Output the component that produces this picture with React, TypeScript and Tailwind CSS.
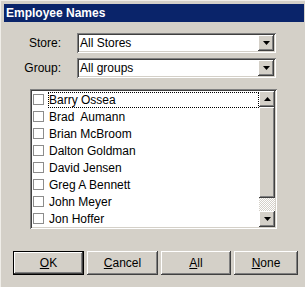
import React from "react";

const font = { fontFamily: '"Liberation Sans", Arial, sans-serif' };

function Down() {
  return (
    <svg width="7" height="4" viewBox="0 0 7 4">
      <path d="M0 0h7L3.5 4z" fill="#000" />
    </svg>
  );
}
function Up() {
  return (
    <svg width="7" height="4" viewBox="0 0 7 4">
      <path d="M0 4h7L3.5 0z" fill="#000" />
    </svg>
  );
}

const raised =
  "bg-[#d4d0c8] shadow-[inset_-1px_-1px_#404040,inset_1px_1px_#fff,inset_-2px_-2px_#808080,inset_2px_2px_#d4d0c8]";
const sunken =
  "shadow-[inset_1px_1px_#808080,inset_-1px_-1px_#fff,inset_2px_2px_#404040,inset_-2px_-2px_#d4d0c8]";

function Combo({ value }: { value: string }) {
  return (
    <div className={`ml-[16px] w-[199px] h-[20px] bg-white p-[2px] flex items-center ${sunken}`}>
      <div className="flex-1 pl-[1px] text-[12px] text-black leading-none">{value}</div>
      <div className={`w-[16px] h-[16px] flex items-center justify-center ${raised}`}>
        <Down />
      </div>
    </div>
  );
}

const names = [
  "Barry Ossea",
  "Brad  Aumann",
  "Brian McBroom",
  "Dalton Goldman",
  "David Jensen",
  "Greg A Bennett",
  "John Meyer",
  "Jon Hoffer",
];

function Btn({ label, rest, w, def }: { label: string; rest: string; w: string; def?: boolean }) {
  const inner = (
    <div className={`h-full w-full flex items-center justify-center text-[12px] text-black ${raised}`}>
      <span>
        <span className="underline">{label}</span>
        {rest}
      </span>
    </div>
  );
  return def ? (
    <div className={`${w} h-[24px] border border-black`}>{inner}</div>
  ) : (
    <div className={`${w} h-[24px]`}>{inner}</div>
  );
}

export default function App() {
  return (
    <div
      className="w-[305px] h-[287px] bg-[#d4d0c8] overflow-hidden flex flex-col pt-[4px] pl-[3px] pr-[1px] border-t border-l border-[#f0eee9]"
      style={font}
    >
      <div className="h-[18px] bg-[#0a246a] text-white font-bold text-[12px] leading-[18px] pl-[2px] -mt-[1px]">
        Employee Names
      </div>

      <div className="mt-[11px] flex items-center h-[20px]">
        <div className="w-[57px] text-right text-[12px] text-black">Store:</div>
        <Combo value="All Stores" />
      </div>
      <div className="mt-[5px] flex items-center h-[20px]">
        <div className="w-[57px] text-right text-[12px] text-black">Group:</div>
        <Combo value="All groups" />
      </div>

      <div className={`mt-[11px] ml-[26px] w-[247px] h-[140px] bg-white p-[2px] flex ${sunken}`}>
        <div className="flex-1 flex flex-col">
          {names.map((n, i) => (
            <div key={n} className="h-[17px] flex items-center">
              <div className="ml-[1px] w-[11px] h-[11px] border border-[#8c8c8c] bg-white shrink-0" />
              <div
                className={`ml-[4px] flex-1 h-[16px] flex items-center pl-[1px] text-[12px] text-black whitespace-pre ${
                  i === 0 ? "outline outline-1 outline-dotted outline-black -outline-offset-1" : ""
                }`}
              >
                {n}
              </div>
            </div>
          ))}
        </div>
        <div className="w-[16px] flex flex-col">
          <div className={`h-[16px] flex items-center justify-center ${raised}`}>
            <Up />
          </div>
          <div className={`h-[91px] ${raised}`} />
          <div className="flex-1 [background:repeating-conic-gradient(#fff_0%_25%,#d4d0c8_0%_50%)_0_0/2px_2px]" />
          <div className={`h-[16px] flex items-center justify-center ${raised}`}>
            <Down />
          </div>
        </div>
      </div>

      <div className="mt-[22px] ml-[9px] flex gap-[3px]">
        <Btn label="O" rest="K" w="w-[71px]" def />
        <Btn label="C" rest="ancel" w="w-[71px]" />
        <Btn label="A" rest="ll" w="w-[70px]" />
        <Btn label="N" rest="one" w="w-[64px]" />
      </div>
    </div>
  );
}
